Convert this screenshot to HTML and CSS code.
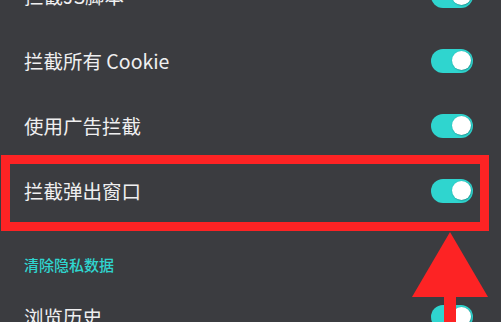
FILE: index.html
```html
<!DOCTYPE html>
<html lang="zh">
<head>
<meta charset="utf-8">
<link rel="stylesheet" href="styles.css">
</head>
<body>
<div class="screen">
  <div class="list">
    <div class="row"><span class="label">拦截JS脚本</span><span class="toggle"><span class="thumb"></span></span></div>
    <div class="row"><span class="label">拦截所有 Cookie</span><span class="toggle"><span class="thumb"></span></span></div>
    <div class="row"><span class="label">使用广告拦截</span><span class="toggle"><span class="thumb"></span></span></div>
    <div class="row"><span class="label">拦截弹出窗口</span><span class="toggle"><span class="thumb"></span></span></div>
    <div class="section-title">清除隐私数据</div>
    <div class="row"><span class="label">浏览历史</span><span class="toggle"><span class="thumb"></span></span></div>
  </div>
  <div class="highlight"></div>
  <svg class="arrow" width="501" height="322" viewBox="0 0 501 322">
    <polygon points="450,232 412,297 488,297" fill="#fd2324"/>
    <rect x="444" y="296" width="12" height="30" fill="#fd2324"/>
  </svg>
</div>
</body>
</html>
```

FILE: styles.css
```css
html, body {
  margin: 0;
  padding: 0;
  background: #3b3c40;
}
.screen {
  position: relative;
  width: 501px;
  height: 322px;
  overflow: hidden;
  background: #3b3c40;
  font-family: "Noto Sans CJK SC", "Noto Sans", sans-serif;
}
.list {
  display: flex;
  flex-direction: column;
  margin-top: -37px;
}
.row {
  height: 65px;
  display: flex;
  align-items: center;
  justify-content: space-between;
  padding: 0 28px 0 24px;
}
.label {
  color: #efeff0;
  font-size: 19.5px;
  line-height: 24px;
  font-weight: 400;
}
.toggle {
  width: 42px;
  height: 24px;
  border-radius: 12px;
  background: #2fd5cf;
  display: flex;
  align-items: center;
  justify-content: flex-end;
  padding-right: 2px;
  box-sizing: border-box;
}
.thumb {
  width: 19px;
  height: 19px;
  border-radius: 50%;
  background: #ffffff;
  box-shadow: 0.5px 0.5px 1.5px rgba(0, 60, 60, 0.5);
}
.section-title {
  height: 61px;
  box-sizing: border-box;
  padding: 32px 0 0 24px;
  color: #2fd5cf;
  font-size: 15px;
  line-height: 20px;
  font-weight: 500;
}
.highlight {
  position: absolute;
  left: 1px;
  top: 155px;
  width: 488px;
  height: 76px;
  box-sizing: border-box;
  border: 9px solid #fd2324;
}
.arrow {
  position: absolute;
  left: 0;
  top: 0;
}
```
